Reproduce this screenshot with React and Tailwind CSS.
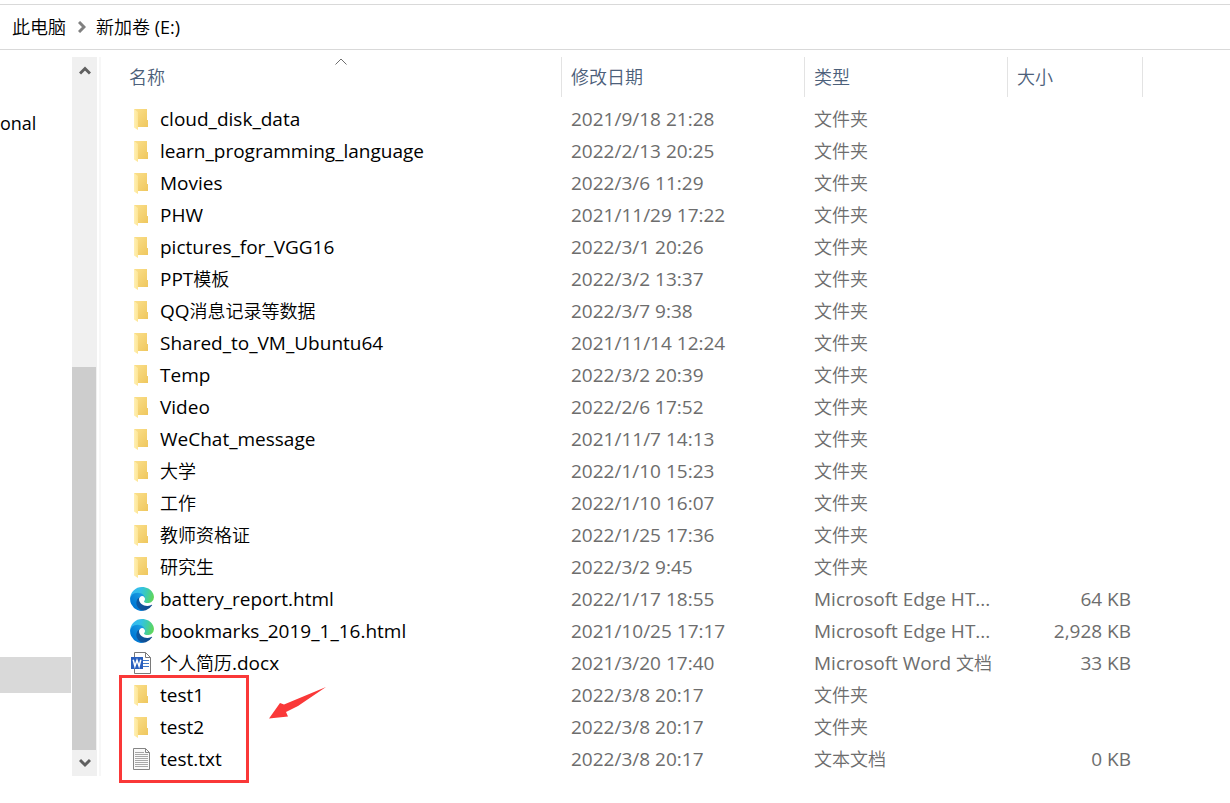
import React from "react";

const isHan = /([\u4e00-\u9fff]+)/;

function Label({ children }) {
  return children.split(isHan).filter(Boolean).map((run, i) => (
    <span key={i} className={isHan.test(run) ? "text-[18px] font-[350]" : "text-[19px]"}>{run}</span>
  ));
}

function FolderIcon() {
  return (
    <svg viewBox="0 0 24 24" className="size-6" aria-hidden="true">
      <defs>
        <linearGradient id="folderBack" x1="0" x2="1" y1="0" y2="1">
          <stop offset="0" stopColor="#fbe08c" />
          <stop offset="1" stopColor="#efc75e" />
        </linearGradient>
        <linearGradient id="folderFront" x1="0" x2="1">
          <stop offset="0" stopColor="#fff0b5" />
          <stop offset="1" stopColor="#fde595" />
        </linearGradient>
      </defs>
      <path d="M4 2h13v11h1v7H7z" fill="url(#folderBack)" />
      <path d="M4 2l4 3v18l-4-2.500z" fill="url(#folderFront)" />
    </svg>
  );
}

function EdgeIcon() {
  return (
    <svg viewBox="4 5 257 256" className="size-6" aria-hidden="true">
      <defs>
        <linearGradient id="edgeDeep" x1="63" x2="242" y1="180" y2="180" gradientUnits="userSpaceOnUse">
          <stop offset="0" stopColor="#0c59a4" />
          <stop offset="1" stopColor="#114a8b" />
        </linearGradient>
        <linearGradient id="edgeMid" x1="158" x2="46" y1="100" y2="222" gradientUnits="userSpaceOnUse">
          <stop offset="0" stopColor="#1b9de2" />
          <stop offset="0.2" stopColor="#1595df" />
          <stop offset="0.7" stopColor="#0680d7" />
          <stop offset="1" stopColor="#0078d4" />
        </linearGradient>
        <linearGradient id="edgeTop" x1="20" x2="250" y1="60" y2="120" gradientUnits="userSpaceOnUse">
          <stop offset="0" stopColor="#35b8f1" />
          <stop offset="0.4" stopColor="#34c1e4" />
          <stop offset="0.65" stopColor="#3ccbb4" />
          <stop offset="1" stopColor="#5fd65a" />
        </linearGradient>
      </defs>
      <path fill="url(#edgeDeep)" d="M235.680 195.460a93.730 93.730 0 0 1-10.540 4.710 101.870 101.870 0 0 1-35.900 6.460c-47.320 0-88.540-32.550-88.540-74.320A31.480 31.480 0 0 1 117.130 105c-42.800 1.800-53.800 46.400-53.800 72.530 0 73.880 68.090 81.370 82.760 81.370 7.910 0 19.840-2.300 27-4.560l1.310-.44a128.340 128.340 0 0 0 66.600-52.800 4 4 0 0 0-5.320-5.640z" />
      <path fill="url(#edgeMid)" d="M110.340 246.340A79.200 79.200 0 0 1 87.600 225a80.720 80.720 0 0 1 29.530-120c3.120-1.470 8.450-4.130 15.540-4a32.350 32.350 0 0 1 25.690 13 31.880 31.880 0 0 1 6.360 18.660c0-.21 24.460-79.600-80-79.600-43.900 0-80 41.660-80 78.210a130.150 130.150 0 0 0 12.110 56 128 128 0 0 0 156.380 67.110 75.550 75.550 0 0 1-62.780-8z" />
      <path fill="url(#edgeTop)" d="M156.940 153.780c-.81 1.050-3.300 2.500-3.300 5.660 0 2.610 1.700 5.120 4.720 7.230 14.380 10 41.490 8.680 41.560 8.680a59.560 59.560 0 0 0 30.270-8.350A61.380 61.380 0 0 0 260.630 114c.26-22.410-8-37.310-11.340-43.910C228.090 28.760 182.350 5 132.620 5A128 128 0 0 0 4.630 131.290c.48-36.540 36.800-66.050 80-66.050 3.500 0 23.460.34 42 10.070 16.340 8.580 24.900 18.940 30.850 29.210 6.180 10.670 7.280 24.150 7.280 29.520s-2.740 13.330-7.820 19.740z" />
    </svg>
  );
}

function WordIcon() {
  return (
    <svg viewBox="0 0 24 24" className="size-6" aria-hidden="true">
      <path d="M4.500 1.500h11l5 5v16h-16z" fill="#fff" stroke="#7a7a7a" />
      <path d="M15.500 1.500v5h5" fill="none" stroke="#7a7a7a" />
      <path d="M13 9.500h6M13 12.500h6M13 15.500h6" stroke="#3f78c8" />
      <path d="M1 6h12v12H1z" fill="#2a5fbe" />
      <path d="M3.200 8.800l1.700 6.400 2.100-6 2.100 6 1.700-6.400" fill="none" stroke="#fff" strokeWidth="1.500" />
    </svg>
  );
}

function TextIcon() {
  return (
    <svg viewBox="0 0 24 24" className="size-6" aria-hidden="true">
      <path d="M3.500 1.500h12l4 4v17h-16z" fill="#fafafa" stroke="#858585" />
      <path d="M15.500 1.500v4h4" fill="none" stroke="#858585" />
      <path d="M5 5.500h9M5 7.500h13M5 9.500h13M5 11.500h13M5 13.500h13M5 15.500h13M5 17.500h13M5 19.500h13" stroke="#a8a8a8" />
    </svg>
  );
}

const icons = { folder: FolderIcon, edge: EdgeIcon, word: WordIcon, text: TextIcon };

const files = [
  ["folder", "cloud_disk_data", "2021/9/18 21:28", "文件夹", ""],
  ["folder", "learn_programming_language", "2022/2/13 20:25", "文件夹", ""],
  ["folder", "Movies", "2022/3/6 11:29", "文件夹", ""],
  ["folder", "PHW", "2021/11/29 17:22", "文件夹", ""],
  ["folder", "pictures_for_VGG16", "2022/3/1 20:26", "文件夹", ""],
  ["folder", "PPT模板", "2022/3/2 13:37", "文件夹", ""],
  ["folder", "QQ消息记录等数据", "2022/3/7 9:38", "文件夹", ""],
  ["folder", "Shared_to_VM_Ubuntu64", "2021/11/14 12:24", "文件夹", ""],
  ["folder", "Temp", "2022/3/2 20:39", "文件夹", ""],
  ["folder", "Video", "2022/2/6 17:52", "文件夹", ""],
  ["folder", "WeChat_message", "2021/11/7 14:13", "文件夹", ""],
  ["folder", "大学", "2022/1/10 15:23", "文件夹", ""],
  ["folder", "工作", "2022/1/10 16:07", "文件夹", ""],
  ["folder", "教师资格证", "2022/1/25 17:36", "文件夹", ""],
  ["folder", "研究生", "2022/3/2 9:45", "文件夹", ""],
  ["edge", "battery_report.html", "2022/1/17 18:55", "Microsoft Edge HT...", "64 KB"],
  ["edge", "bookmarks_2019_1_16.html", "2021/10/25 17:17", "Microsoft Edge HT...", "2,928 KB"],
  ["word", "个人简历.docx", "2021/3/20 17:40", "Microsoft Word 文档", "33 KB"],
  ["folder", "test1", "2022/3/8 20:17", "文件夹", ""],
  ["folder", "test2", "2022/3/8 20:17", "文件夹", ""],
  ["text", "test.txt", "2022/3/8 20:17", "文本文档", "0 KB"],
];

function ScrollArrow({ label, d }) {
  return (
    <button aria-label={label} className="flex h-[26px] w-full shrink-0 items-center justify-center">
      <svg viewBox="0 0 12 10" className="h-[10px] w-3" aria-hidden="true">
        <path d={d} fill="none" stroke="#606060" strokeWidth="3" />
      </svg>
    </button>
  );
}

function HeaderCell({ children, sorted }) {
  return (
    <th scope="col" className="relative h-10 border-r border-[#e3e3e3] p-0 text-left font-normal">
      {sorted && (
        <svg viewBox="0 0 12 7" className="absolute top-px left-1/2 h-[7px] w-3 -translate-x-1/2" aria-hidden="true">
          <path d="M.5 6.500L6 1l5.500 5.500" fill="none" stroke="#6d6d6d" />
        </svg>
      )}
      <button className="h-10 w-full px-[9px] text-left text-[18px] font-[350] text-[#4c607a]">{children}</button>
    </th>
  );
}

export default function App() {
  return (
    <div className="min-h-screen bg-white pt-1 font-['Open_Sans','Noto_Sans_CJK_SC',sans-serif] text-black">
      <nav aria-label="路径" className="flex h-[46px] items-center border-y border-[#d9d9d9] pl-3 text-[18px] font-[350]">
        <a href="#pc">此电脑</a>
        <svg viewBox="0 0 8 12" className="mr-[10px] ml-3 h-3 w-2" aria-hidden="true">
          <path d="M1 1l5 5-5 5" fill="none" stroke="#808080" strokeWidth="3" />
        </svg>
        <a href="#e">新加卷<span className="font-normal"> (E:)</span></a>
      </nav>

      <div className="flex pt-[7px]">
        <aside className="flex w-[71px] shrink-0 flex-col overflow-hidden">
          <div className="mt-[50px] h-8 text-[18px] leading-8">onal</div>
          <div className="mt-[518px] h-9 bg-[#d9d9d9]" />
        </aside>

        <div className="ml-px flex w-[25px] shrink-0 flex-col bg-[#f0f0f0]">
          <ScrollArrow label="向上滚动" d="M1 8.500l5-5 5 5" />
          <div className="flex grow flex-col justify-end">
            <div className="mr-px h-[383px] bg-[#cdcdcd]" />
          </div>
          <ScrollArrow label="向下滚动" d="M1 2l5 5 5-5" />
        </div>

        <main className="relative ml-[2px] min-w-0 grow border-l-2 border-[#f7f7f7] pb-px pl-[19px]">
          <table className="w-full table-fixed border-separate border-spacing-0">
            <colgroup>
              <col className="w-[442px]" />
              <col className="w-[243px]" />
              <col className="w-[203px]" />
              <col className="w-[135px]" />
              <col />
            </colgroup>
            <thead>
              <tr>
                <HeaderCell sorted>名称</HeaderCell>
                <HeaderCell>修改日期</HeaderCell>
                <HeaderCell>类型</HeaderCell>
                <HeaderCell>大小</HeaderCell>
                <td />
              </tr>
              <tr className="h-[6px]"><td colSpan={5} className="p-0" /></tr>
            </thead>
            <tbody className="leading-8 whitespace-nowrap text-[#6d6d6d]">
              {files.map(([kind, name, date, type, size]) => {
                const Icon = icons[kind];
                return (
                  <tr key={name} className="h-8">
                    <td className="p-0 text-black">
                      <div className="flex h-8 items-center gap-[6px] pl-[10px]">
                        <Icon />
                        <div><Label>{name}</Label></div>
                      </div>
                    </td>
                    <td className="p-0 pl-[9px]"><div className="h-8"><Label>{date}</Label></div></td>
                    <td className="p-0 pl-[9px]"><div className="h-8"><Label>{type}</Label></div></td>
                    <td className="p-0 pr-3 text-right"><div className="h-8"><Label>{size}</Label></div></td>
                    <td />
                  </tr>
                );
              })}
            </tbody>
          </table>

          <div className="pointer-events-none absolute -bottom-[7px] left-[18px] h-[108px] w-[130px] border-3 border-[#fa3838]" />
          <svg viewBox="0 0 58 34" className="pointer-events-none absolute bottom-[56px] left-[167px] h-[34px] w-[58px]" aria-hidden="true">
            <path d="M58 1L16 18.500l-4-1.500L1 32.500l19-2-2-4.500 12-6z" fill="#fa3838" />
          </svg>
        </main>
      </div>
    </div>
  );
}
